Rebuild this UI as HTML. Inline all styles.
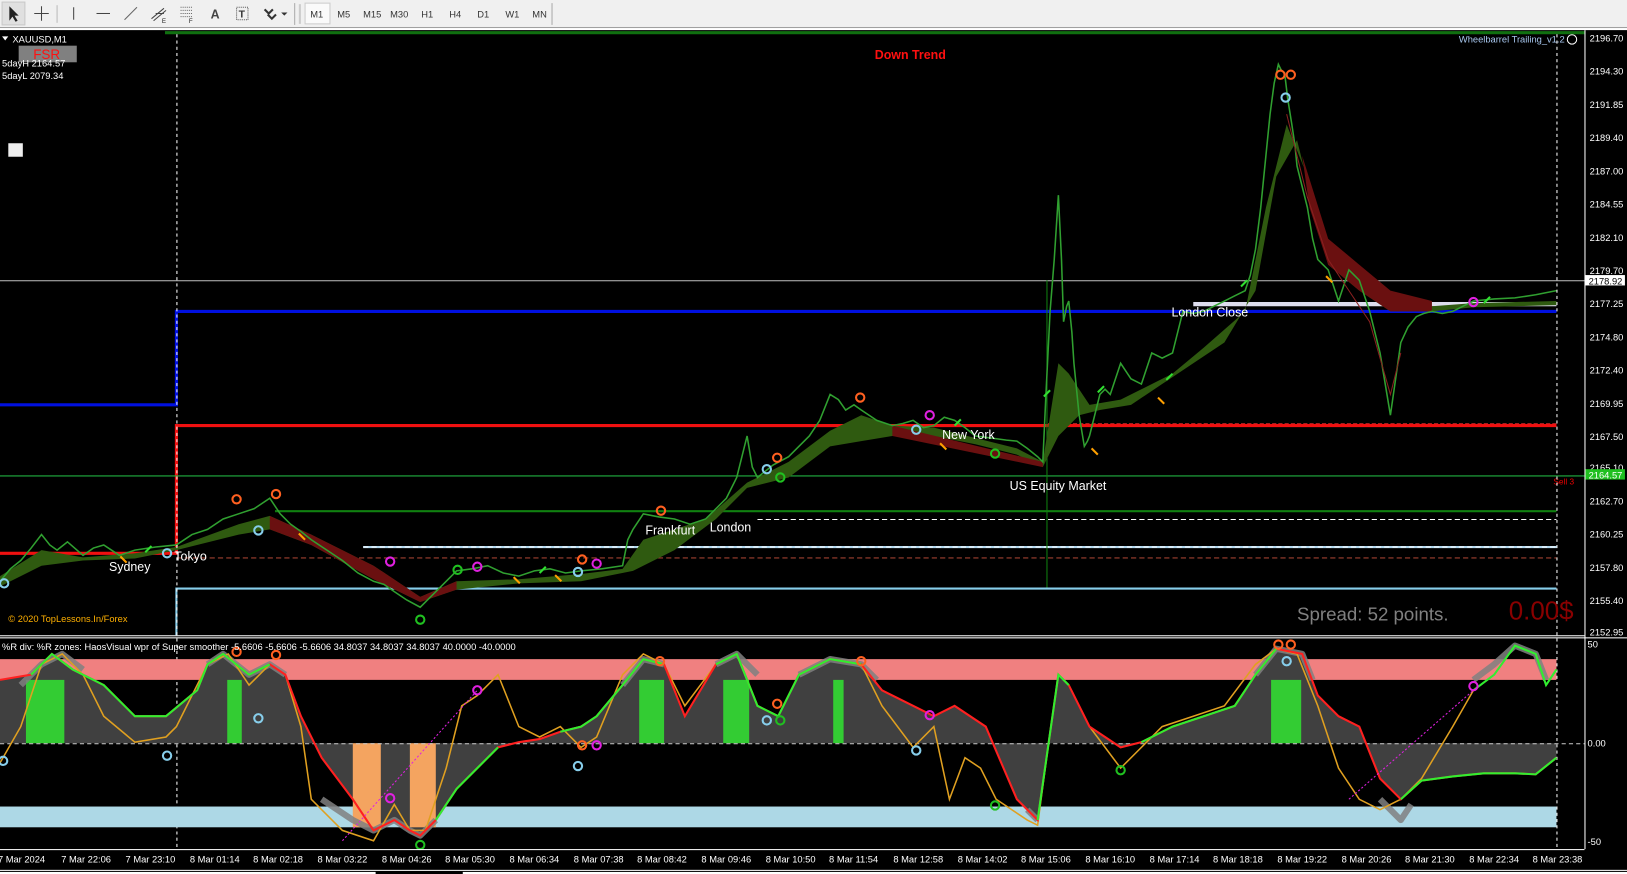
<!DOCTYPE html>
<html><head><meta charset="utf-8"><style>
html,body{margin:0;padding:0;background:#000;overflow:hidden}
svg{display:block}
text{font-family:"Liberation Sans",sans-serif}
</style></head><body>
<svg width="1627" height="874" viewBox="0 0 1568 842" preserveAspectRatio="none" xmlns="http://www.w3.org/2000/svg">
<rect width="1568" height="842" fill="#000"/>
<rect x="0" y="0" width="1568" height="27" fill="#f0f0f0"/>
<rect x="0" y="26" width="1568" height="1" fill="#a0a0a0"/>
<rect x="2" y="2" width="22" height="22" fill="#e0e0e0" stroke="#c8c8c8"/>
<path d="M9 6 L9 20 L12 16 L15 21 L17 20 L14 15 L18 15 Z" fill="#222"/>
<path d="M40 6 V20 M33 13 H47" stroke="#444" stroke-width="1"/>
<line x1="55" y1="5" x2="55" y2="22" stroke="#bbb"/>
<line x1="71" y1="7" x2="71" y2="19" stroke="#444"/>
<line x1="93" y1="13" x2="106" y2="13" stroke="#444"/>
<line x1="120" y1="19" x2="132" y2="7" stroke="#666"/>
<path d="M146 18 L158 8 M148 20 L160 10 M150 13 h8" stroke="#444"/><text x="156" y="22" font-size="6" fill="#222">E</text>
<path d="M174 7h12M174 10h12M174 13h12M174 16h12" stroke="#666" stroke-dasharray="1,1"/><text x="182" y="22" font-size="6" fill="#222">F</text>
<text x="203" y="18" font-size="12" fill="#444" font-weight="bold">A</text>
<rect x="228" y="7" width="11" height="12" fill="none" stroke="#555" stroke-dasharray="1,1"/><text x="230" y="17" font-size="10" fill="#333" font-weight="bold">T</text>
<path d="M255 9 l4 4 l4 -4 M258 14 l4 4 l4 -4" stroke="#333" stroke-width="2" fill="none"/><path d="M271 12 l3 3 l3 -3z" fill="#333"/>
<line x1="284" y1="3" x2="284" y2="24" stroke="#aaa"/>
<rect x="288" y="4" width="2" height="19" fill="#ccc"/>
<rect x="294" y="3" width="24" height="20" fill="#fafafa" stroke="#ccc"/>
<g font-size="9" fill="#333"><text x="299" y="17">M1</text><text x="325" y="17">M5</text><text x="350" y="17">M15</text><text x="376" y="17">M30</text><text x="406" y="17">H1</text><text x="433" y="17">H4</text><text x="460" y="17">D1</text><text x="487" y="17">W1</text><text x="513" y="17">MN</text></g>
<line x1="532" y1="3" x2="532" y2="24" stroke="#aaa"/>
<rect x="0" y="27" width="1568" height="2" fill="#fff"/>
<rect x="159" y="30" width="1368" height="3" fill="#107010"/>
<line x1="1527.5" y1="29" x2="1527.5" y2="818" stroke="#fff"/>
<g font-size="9" fill="#fff">
<text x="1532" y="40">2196.70</text><text x="1532" y="72">2194.30</text><text x="1532" y="104">2191.85</text><text x="1532" y="136">2189.40</text><text x="1532" y="168">2187.00</text><text x="1532" y="200">2184.55</text><text x="1532" y="232">2182.10</text><text x="1532" y="264">2179.70</text><text x="1532" y="296">2177.25</text><text x="1532" y="328">2174.80</text><text x="1532" y="360">2172.40</text><text x="1532" y="392">2169.95</text><text x="1532" y="424">2167.50</text><text x="1532" y="454">2165.10</text><text x="1532" y="486">2162.70</text><text x="1532" y="518">2160.25</text><text x="1532" y="550">2157.80</text><text x="1532" y="582">2155.40</text><text x="1532" y="612">2152.95</text>
</g>
<rect x="1528" y="265" width="38" height="10" fill="#fff"/><text x="1531" y="274" font-size="9" fill="#000">2178.92</text>
<rect x="1528" y="452" width="38" height="10" fill="#20c020"/><text x="1531" y="461" font-size="9" fill="#fff">2164.57</text>
<text x="1497" y="467" font-size="8" fill="#e00">Sell 3</text>
<line x1="0" y1="270.5" x2="1527" y2="270.5" stroke="#c0c0c0"/>
<path d="M0 390 H170 V300 H1500" stroke="#0010e0" stroke-width="3" fill="none"/>
<path d="M0 533 H170 V410 H1500" stroke="#f01010" stroke-width="3" fill="none"/>
<line x1="0" y1="458.5" x2="1527" y2="458.5" stroke="#20b040"/>
<line x1="265" y1="492.5" x2="1500" y2="492.5" stroke="#108010" stroke-width="2"/>
<line x1="730" y1="500.5" x2="1500" y2="500.5" stroke="#fff" stroke-dasharray="5,3"/>
<line x1="350" y1="527" x2="1500" y2="527" stroke="#b0d8f0" stroke-width="2"/>
<line x1="350" y1="527" x2="1500" y2="527" stroke="#fff" stroke-dasharray="5,3"/>
<line x1="170" y1="537.5" x2="1500" y2="537.5" stroke="#a04030" stroke-dasharray="5,3"/>
<path d="M170 612 V567 H1500" stroke="#87ceeb" stroke-width="2" fill="none"/>
<line x1="1150" y1="293" x2="1500" y2="293" stroke="#dde" stroke-width="4"/>
<line x1="1010" y1="408" x2="1500" y2="408" stroke="#a02020" stroke-dasharray="4,2"/>
<line x1="1009" y1="270" x2="1009" y2="566" stroke="#108010"/>
<path d="M0 555 L40 530 L80 537 L130 533 L170 527 L230 505 L260 497 L300 515 L360 545 L405 575 L440 560 L500 558 L560 553 L600 548 L620 520 L680 500 L720 465 L760 445 L800 415 L830 400 L860 410 L900 412 L940 422 L980 432 L1005 445 L1020 350 L1030 360 L1050 390 L1080 385 L1100 375 L1130 360 L1160 335 L1200 300 L1220 200 L1240 120 L1260 170 L1280 240 L1310 270 L1340 290 L1380 295 L1420 292 L1500 290 L1500 294 L1420 296 L1380 300 L1340 300 L1310 280 L1280 255 L1250 135 L1230 170 L1210 280 L1180 330 L1150 350 L1120 370 L1090 390 L1060 395 L1040 400 L1020 420 L1005 450 L980 438 L940 428 L900 420 L860 420 L830 425 L800 430 L760 460 L720 470 L690 500 L650 530 L610 550 L560 560 L500 562 L440 568 L405 580 L360 558 L300 525 L260 510 L230 515 L170 530 L130 538 L80 540 L40 545 L0 565 Z" fill="#2f5a10"/>
<path d="M260 497 L300 515 L360 545 L405 575 L440 560 L440 568 L405 580 L360 558 L300 525 L260 510Z M1255 150 L1280 230 L1310 255 L1340 280 L1380 290 L1380 300 L1340 300 L1310 280 L1280 255 L1262 200 Z M860 410 L1005 445 L1005 450 L860 420Z" fill="#6a1010"/>
<polyline fill="none" stroke="#30a030" stroke-width="1.5" points="0,560 10,548 20,540 30,528 40,515 48,525 55,530 65,522 80,535 90,528 100,525 115,535 130,530 150,527 170,525 185,515 200,510 215,500 230,495 245,490 260,480 270,495 280,505 290,512 300,520 315,530 330,540 345,552 360,560 370,563 380,570 392,578 405,585 412,578 420,570 430,560 440,550 455,548 470,545 485,552 500,555 515,550 530,548 545,552 560,550 580,548 600,545 605,520 610,510 620,495 635,498 650,500 665,505 680,500 690,490 700,480 710,460 720,420 725,450 730,460 745,448 760,440 770,430 780,420 790,405 800,380 808,385 815,395 823,390 830,395 845,405 860,410 870,408 880,405 890,412 900,410 910,402 920,405 930,412 940,420 955,422 970,424 980,425 990,432 1000,440 1005,445 1008,380 1012,300 1016,250 1020,188 1023,250 1025,310 1028,295 1030,290 1033,320 1035,350 1040,400 1045,430 1048,425 1050,420 1055,400 1060,380 1065,375 1070,380 1075,365 1080,350 1090,365 1100,370 1105,355 1110,340 1120,345 1130,340 1135,320 1140,300 1150,302 1160,300 1170,295 1180,290 1190,285 1200,280 1205,265 1210,240 1215,200 1220,150 1224,110 1228,80 1232,62 1235,68 1238,70 1241,95 1245,120 1248,140 1250,160 1255,180 1260,200 1265,230 1270,250 1275,255 1280,260 1285,275 1290,290 1295,275 1300,260 1305,265 1310,270 1315,285 1320,300 1325,320 1330,340 1335,370 1340,400 1345,365 1350,330 1357,315 1365,305 1372,302 1380,300 1390,302 1400,300 1410,295 1420,290 1440,288 1460,287 1480,284 1500,280"/>
<polyline fill="none" stroke="#8a2020" stroke-width="1" points="1240,110 1260,190 1280,250 1300,280 1320,310 1340,380 1350,340"/>
<line x1="170.5" y1="33" x2="170.5" y2="818" stroke="#fff" stroke-dasharray="3,3"/>
<line x1="1500.5" y1="33" x2="1500.5" y2="818" stroke="#fff" stroke-dasharray="3,3"/>
<g fill="none" stroke-width="2">
<circle cx="228" cy="481" r="4" stroke="#ff6020"/><circle cx="266" cy="476" r="4" stroke="#ff6020"/><circle cx="637" cy="492" r="4" stroke="#ff6020"/><circle cx="749" cy="441" r="4" stroke="#ff6020"/><circle cx="829" cy="383" r="4" stroke="#ff6020"/><circle cx="1234" cy="72" r="4" stroke="#ff6020"/><circle cx="1244" cy="72" r="4" stroke="#ff6020"/><circle cx="561" cy="539" r="4" stroke="#ff6020"/>
<circle cx="249" cy="511" r="4" stroke="#87ceeb"/><circle cx="161" cy="533" r="4" stroke="#87ceeb"/><circle cx="739" cy="452" r="4" stroke="#87ceeb"/><circle cx="883" cy="414" r="4" stroke="#87ceeb"/><circle cx="1239" cy="94" r="4" stroke="#87ceeb"/><circle cx="557" cy="551" r="4" stroke="#87ceeb"/><circle cx="4" cy="562" r="4" stroke="#87ceeb"/>
<circle cx="376" cy="541" r="4" stroke="#e020e0"/><circle cx="460" cy="546" r="4" stroke="#e020e0"/><circle cx="575" cy="543" r="4" stroke="#e020e0"/><circle cx="896" cy="400" r="4" stroke="#e020e0"/><circle cx="1420" cy="291" r="4" stroke="#e020e0"/>
<circle cx="405" cy="597" r="4" stroke="#20c020"/><circle cx="959" cy="437" r="4" stroke="#20c020"/><circle cx="752" cy="460" r="4" stroke="#20c020"/><circle cx="441" cy="549" r="4" stroke="#20c020"/>
</g>
<g stroke="#ffa000" stroke-width="2"><path d="M116 536 l6 6 M288 514 l6 6 M495 556 l6 6 M535 554 l6 6 M906 427 l6 6 M1052 432 l6 6 M1116 383 l6 6 M1278 266 l6 6"/></g>
<g stroke="#30e030" stroke-width="2"><path d="M140 532 l6 -6 M520 552 l6 -6 M1006 382 l6 -6 M1058 378 l6 -6 M1124 366 l6 -6 M1196 276 l6 -6 M1430 292 l6 -6 M920 410 l6 -6"/></g>
<rect x="18" y="44" width="56" height="16" fill="#808080"/>
<text x="32" y="57" font-size="13" fill="#ff1010">FSR</text>
<path d="M2 35 l6 0 l-3 4z" fill="#fff"/>
<g font-size="9" fill="#fff"><text x="12" y="41">XAUUSD,M1</text><text x="2" y="64">5dayH 2164.57</text><text x="2" y="76">5dayL 2079.34</text></g>
<rect x="8" y="138" width="14" height="13" fill="#eee"/>
<text x="843" y="57" font-size="12" font-weight="bold" fill="#ff1010">Down Trend</text>
<text x="1406" y="41" font-size="9" fill="#a8c8f0">Wheelbarrel Trailing_v1.2</text>
<circle cx="1515" cy="38" r="4.5" fill="none" stroke="#fff"/>
<g font-size="12" fill="#fff"><text x="105" y="550">Sydney</text><text x="168" y="540">Tokyo</text><text x="622" y="515">Frankfurt</text><text x="684" y="512">London</text><text x="908" y="423">New York</text><text x="973" y="472">US Equity Market</text><text x="1129" y="305">London Close</text></g>
<text x="8" y="599" font-size="9" fill="#ffb000">© 2020 TopLessons.In/Forex</text>
<text x="1250" y="598" font-size="18" fill="#808080">Spread: 52 points.</text>
<text x="1454" y="597" font-size="25" fill="#8a0000">0.00$</text>
<rect x="0" y="612" width="1527" height="1" fill="#fff"/><rect x="0" y="614" width="1568" height="1" fill="#fff"/>
<rect x="0" y="635" width="1500" height="20" fill="#f08080"/>
<rect x="0" y="777" width="1500" height="20" fill="#add8e6"/>
<path d="M0 716 L0 655 L30 650 L50 630 L70 645 L100 660 L130 690 L160 690 L190 665 L200 640 L215 630 L240 650 L260 640 L275 650 L290 690 L310 730 L340 770 L360 800 L380 790 L395 800 L405 805 L420 790 L440 760 L460 740 L480 720 L500 715 L520 712 L540 705 L560 700 L575 690 L600 660 L620 635 L640 640 L660 690 L690 640 L710 630 L730 680 L750 690 L770 650 L800 635 L830 640 L850 665 L880 680 L900 690 L920 680 L950 700 L980 770 L1000 790 L1010 720 L1020 650 L1030 660 L1050 700 L1080 720 L1100 715 L1130 700 L1160 690 L1190 680 L1210 650 L1230 625 L1255 630 L1270 670 L1290 690 L1310 700 L1330 750 L1350 770 L1370 752 L1400 748 L1430 745 L1460 745 L1480 746 L1500 730 L1500 716 Z" fill="#404040"/>
<g fill="#33cc33"><rect x="25" y="655" width="37" height="61"/><rect x="219" y="655" width="14" height="61"/><rect x="616" y="655" width="24" height="61"/><rect x="697" y="655" width="25" height="61"/><rect x="803" y="655" width="10" height="61"/><rect x="1225" y="655" width="29" height="61"/></g>
<g fill="#f4a460"><rect x="340" y="716" width="27" height="81"/><rect x="395" y="716" width="25" height="81"/></g>
<line x1="0" y1="716.5" x2="1527" y2="716.5" stroke="#ccc" stroke-dasharray="4,3"/>
<g fill="none" stroke="#808080" stroke-width="6" opacity="0.85" stroke-linejoin="round">
<polyline points="20,660 40,640 60,630 80,645"/>
<polyline points="200,640 215,630 240,650 260,640 275,650"/>
<polyline points="310,770 340,790 360,800 380,790 395,800 405,805 420,790"/>
<polyline points="600,660 620,635 640,640"/>
<polyline points="690,640 710,630 730,650"/>
<polyline points="770,650 800,635 830,640 845,655"/>
<polyline points="1000,790 990,780"/>
<polyline points="1210,650 1230,625 1255,630 1265,655"/>
<polyline points="1330,770 1350,790 1360,775"/>
<polyline points="1420,655 1440,640 1460,622 1480,630 1490,655"/>
</g>
<polyline fill="none" stroke="#e0a020" stroke-width="1.5" points="0,735 20,700 40,640 60,630 80,650 100,690 130,715 160,710 170,700 200,640 220,630 240,660 260,640 275,650 290,700 300,770 330,800 360,810 380,775 395,800 410,800 430,740 445,680 460,670 480,650 500,700 520,710 540,700 560,720 575,710 600,650 620,630 640,640 660,680 690,640 710,630 730,680 750,690 770,650 800,635 830,640 850,680 880,720 900,700 915,770 930,730 945,740 960,770 990,790 1000,795 1010,720 1020,650 1030,660 1050,700 1080,740 1100,720 1120,700 1150,690 1180,680 1210,640 1230,625 1250,630 1270,680 1290,740 1310,770 1330,780 1350,770 1370,750 1400,700 1420,665 1440,650 1460,622 1480,630 1490,660 1500,645"/>
<polyline fill="none" stroke="#ff2020" stroke-width="2" points="0,655 30,650 50,630 70,645 100,660 130,690 160,690 190,665 200,640 215,630 240,650 260,640 275,650 290,690 310,730 340,770 360,800 380,790 395,800 405,805 420,790 440,760 460,740 480,720 500,715 520,712 540,705 560,700 575,690 600,660 620,635 640,640 660,690 690,640 710,630 730,680 750,690 770,650 800,635 830,640 850,665 880,680 900,690 920,680 950,700 980,770 1000,790 1010,720 1020,650 1030,660 1050,700 1080,720 1100,715 1130,700 1160,690 1190,680 1210,650 1230,625 1255,630 1270,670 1290,690 1310,700 1330,750 1350,770 1370,752 1400,748 1430,745 1460,745 1480,746 1500,730"/>
<g fill="none" stroke="#30ee30" stroke-width="2">
<polyline points="30,650 50,630 70,645 100,660 130,690 160,690 190,665 200,640 215,630 240,650 260,640"/>
<polyline points="420,790 440,760 460,740 480,720"/>
<polyline points="540,705 560,700 575,690 600,660 620,635 640,640"/>
<polyline points="690,640 710,630 730,680 750,690 770,650 800,635 830,640"/>
<polyline points="1000,790 1010,720 1020,650 1030,660"/>
<polyline points="1100,715 1130,700 1160,690 1190,680 1210,650 1230,625"/>
<polyline points="1350,770 1370,752 1400,748 1430,745 1460,745 1480,746 1500,730"/>
<polyline points="1420,665 1440,650 1460,622 1480,630 1490,660 1500,645"/>
</g>
<line x1="330" y1="810" x2="460" y2="665" stroke="#e020e0" stroke-dasharray="2,2"/>
<line x1="1300" y1="770" x2="1420" y2="665" stroke="#e020e0" stroke-dasharray="2,2"/>
<g fill="none" stroke-width="2">
<circle cx="228" cy="628" r="4" stroke="#ff6020"/><circle cx="266" cy="631" r="4" stroke="#ff6020"/><circle cx="636" cy="637" r="4" stroke="#ff6020"/><circle cx="830" cy="637" r="4" stroke="#ff6020"/><circle cx="749" cy="678" r="4" stroke="#ff6020"/><circle cx="1232" cy="621" r="4" stroke="#ff6020"/><circle cx="1244" cy="621" r="4" stroke="#ff6020"/><circle cx="561" cy="718" r="4" stroke="#ff6020"/>
<circle cx="249" cy="692" r="4" stroke="#87ceeb"/><circle cx="161" cy="728" r="4" stroke="#87ceeb"/><circle cx="739" cy="694" r="4" stroke="#87ceeb"/><circle cx="883" cy="723" r="4" stroke="#87ceeb"/><circle cx="557" cy="738" r="4" stroke="#87ceeb"/><circle cx="3" cy="733" r="4" stroke="#87ceeb"/><circle cx="1240" cy="637" r="4" stroke="#87ceeb"/>
<circle cx="460" cy="665" r="4" stroke="#e020e0"/><circle cx="376" cy="769" r="4" stroke="#e020e0"/><circle cx="575" cy="718" r="4" stroke="#e020e0"/><circle cx="896" cy="689" r="4" stroke="#e020e0"/><circle cx="1420" cy="661" r="4" stroke="#e020e0"/>
<circle cx="405" cy="814" r="4" stroke="#20c020"/><circle cx="959" cy="776" r="4" stroke="#20c020"/><circle cx="752" cy="694" r="4" stroke="#20c020"/><circle cx="1080" cy="742" r="4" stroke="#20c020"/>
</g>
<text x="2" y="626" font-size="9" fill="#fff">%R div: %R zones:  HaosVisual wpr of Super smoother -5.6606 -5.6606 -5.6606 34.8037 34.8037 34.8037 40.0000 -40.0000</text>
<g font-size="9" fill="#fff"><text x="1530" y="624">50</text><text x="1530" y="719">0.00</text><text x="1530" y="814">-50</text></g>
<rect x="0" y="818" width="1527" height="1" fill="#fff"/>
<g font-size="9" fill="#fff">
<text x="-2" y="831">7 Mar 2024</text><text x="59" y="831">7 Mar 22:06</text><text x="121" y="831">7 Mar 23:10</text><text x="183" y="831">8 Mar 01:14</text><text x="244" y="831">8 Mar 02:18</text><text x="306" y="831">8 Mar 03:22</text><text x="368" y="831">8 Mar 04:26</text><text x="429" y="831">8 Mar 05:30</text><text x="491" y="831">8 Mar 06:34</text><text x="553" y="831">8 Mar 07:38</text><text x="614" y="831">8 Mar 08:42</text><text x="676" y="831">8 Mar 09:46</text><text x="738" y="831">8 Mar 10:50</text><text x="799" y="831">8 Mar 11:54</text><text x="861" y="831">8 Mar 12:58</text><text x="923" y="831">8 Mar 14:02</text><text x="984" y="831">8 Mar 15:06</text><text x="1046" y="831">8 Mar 16:10</text><text x="1108" y="831">8 Mar 17:14</text><text x="1169" y="831">8 Mar 18:18</text><text x="1231" y="831">8 Mar 19:22</text><text x="1293" y="831">8 Mar 20:26</text><text x="1354" y="831">8 Mar 21:30</text><text x="1416" y="831">8 Mar 22:34</text><text x="1477" y="831">8 Mar 23:38</text>
</g>
<rect x="0" y="838" width="1568" height="1" fill="#fff"/>
<rect x="0" y="840" width="362" height="2" fill="#fff"/><rect x="446" y="840" width="1122" height="2" fill="#fff"/>
</svg>
</body></html>
